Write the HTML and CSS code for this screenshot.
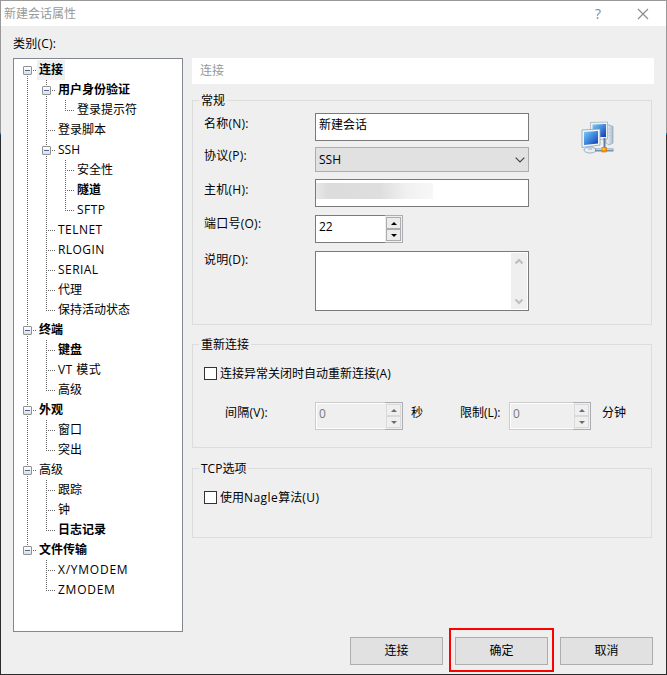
FILE: index.html
```html
<!DOCTYPE html>
<html lang="zh-CN">
<head>
<meta charset="utf-8">
<title>新建会话属性</title>
<link rel="stylesheet" href="styles.css">
</head>
<body>
<div class="window">
  <header class="titlebar">
    <h1>新建会话属性</h1>
    <span class="help">?</span>
    <svg class="close" width="12" height="12" viewBox="0 0 12 12"><path d="M1 1L11 11M11 1L1 11" stroke="#8a8a8a" stroke-width="1.1" fill="none"/></svg>
  </header>
  <div class="category">类别(C):</div>
  <main class="content">
    <nav class="tree">
      <div class="row"><i class="box first"></i><b class="selected">连接</b></div>
      <div class="row"><i class="line"></i><i class="box"></i><b>用户身份验证</b></div>
      <div class="row"><i class="line"></i><i class="line"></i><i class="end"></i><span>登录提示符</span></div>
      <div class="row"><i class="line"></i><i class="tee"></i><span>登录脚本</span></div>
      <div class="row"><i class="line"></i><i class="box"></i><span>SSH</span></div>
      <div class="row"><i class="line"></i><i class="line"></i><i class="tee"></i><span>安全性</span></div>
      <div class="row"><i class="line"></i><i class="line"></i><i class="tee"></i><b>隧道</b></div>
      <div class="row"><i class="line"></i><i class="line"></i><i class="end"></i><span class="latin">SFTP</span></div>
      <div class="row"><i class="line"></i><i class="tee"></i><span class="latin">TELNET</span></div>
      <div class="row"><i class="line"></i><i class="tee"></i><span class="latin">RLOGIN</span></div>
      <div class="row"><i class="line"></i><i class="tee"></i><span class="latin">SERIAL</span></div>
      <div class="row"><i class="line"></i><i class="tee"></i><span>代理</span></div>
      <div class="row"><i class="line"></i><i class="end"></i><span>保持活动状态</span></div>
      <div class="row"><i class="box"></i><b>终端</b></div>
      <div class="row"><i class="line"></i><i class="tee"></i><b>键盘</b></div>
      <div class="row"><i class="line"></i><i class="tee"></i><span class="latin">VT 模式</span></div>
      <div class="row"><i class="line"></i><i class="end"></i><span>高级</span></div>
      <div class="row"><i class="box"></i><b>外观</b></div>
      <div class="row"><i class="line"></i><i class="tee"></i><span>窗口</span></div>
      <div class="row"><i class="line"></i><i class="end"></i><span>突出</span></div>
      <div class="row"><i class="box"></i><span>高级</span></div>
      <div class="row"><i class="line"></i><i class="tee"></i><span>跟踪</span></div>
      <div class="row"><i class="line"></i><i class="tee"></i><span>钟</span></div>
      <div class="row"><i class="line"></i><i class="end"></i><b>日志记录</b></div>
      <div class="row"><i class="box last"></i><b>文件传输</b></div>
      <div class="row"><i></i><i class="tee"></i><span class="latin wide">X/YMODEM</span></div>
      <div class="row"><i></i><i class="end"></i><span class="latin wide">ZMODEM</span></div>
    </nav>
    <div class="panel">
      <h2 class="heading">连接</h2>

      <section class="group general">
        <h3>常规</h3>
        <div class="general-body">
          <div class="form">
            <label class="low">名称(N):</label>
            <div class="input">新建会话</div>
            <label>协议(P):</label>
            <div class="select"><span>SSH</span><svg width="10" height="6" viewBox="0 0 10 6"><path d="M.7 .7L5 5L9.3 .7" fill="none" stroke="#444" stroke-width="1.2"/></svg></div>
            <label class="low">主机(H):</label>
            <div class="input host"><div class="redacted"></div></div>
            <label>端口号(O):</label>
            <div class="spinner">
              <div class="value">22</div>
              <div class="steps"><div class="step"><i class="up"></i></div><div class="step"><i class="down"></i></div></div>
            </div>
            <label>说明(D):</label>
            <div class="textarea">
              <div class="scrollbar">
                <svg width="8" height="7" viewBox="0 0 8 7"><path d="M.5 5.5L4 2L7.5 5.5" fill="none" stroke="#bfbfbf" stroke-width="2.2"/></svg>
                <svg width="8" height="7" viewBox="0 0 8 7"><path d="M.5 1.5L4 5L7.5 1.5" fill="none" stroke="#bfbfbf" stroke-width="2.2"/></svg>
              </div>
            </div>
          </div>
          <svg class="network" width="34" height="34" viewBox="0 0 34 34">
            <defs>
              <linearGradient id="screen" x1="0" y1="0" x2="1" y2="1"><stop offset="0" stop-color="#7ccdf6"/><stop offset=".5" stop-color="#3f86dd"/><stop offset="1" stop-color="#1339b4"/></linearGradient>
              <linearGradient id="tower" x1="0" y1="0" x2="1" y2="0"><stop offset="0" stop-color="#f6f8fa"/><stop offset="1" stop-color="#a9bccb"/></linearGradient>
            </defs>
            <path d="M25 3L32 5.500V22L28 24L25 22Z" fill="url(#tower)" stroke="#8fa5b6" stroke-width=".7"/>
            <path d="M27 8L30 9M27 11L30 12M27 14L30 15" stroke="#bccad5" stroke-width=".8"/>
            <path d="M9.500 1.500L26.500 1V18L20 18.500L9.500 17Z" fill="#eef2f5" stroke="#a3b3c0" stroke-width=".8"/>
            <path d="M11.500 3.500L25 3V16H11.500Z" fill="url(#screen)"/>
            <ellipse cx="9" cy="29" rx="6" ry="3" fill="#e7edf2" stroke="#8ba0b2" stroke-width=".8"/>
            <path d="M6 24H12L11 29H7.500Z" fill="#bccbd6"/>
            <path d="M1 9L19 8V24L1 26.500Z" fill="#f2f5f7" stroke="#8da1b2" stroke-width=".8"/>
            <path d="M3 11L17 10V22.500L3 24Z" fill="url(#screen)"/>
            <path d="M23.500 17V28" stroke="#617f98" stroke-width="2"/>
            <path d="M14 29H32.500" stroke="#7090a8" stroke-width="3"/>
            <path d="M15 28.500H32" stroke="#d3dfe7" stroke-width=".8"/>
            <rect x="21" y="26.500" width="4.500" height="4.500" fill="#f99708" stroke="#dc7100" stroke-width=".6"/>
            <rect x="21.500" y="27" width="2" height="2" fill="#ffd23c"/>
          </svg>
        </div>
      </section>

      <section class="group reconnect">
        <h3>重新连接</h3>
        <label class="check"><span class="tick"></span>连接异常关闭时自动重新连接(A)</label>
        <div class="timing">
          <span class="interval">间隔(V):</span>
          <div class="spinner disabled">
            <div class="value">0</div>
            <div class="steps"><div class="step"><i class="up"></i></div><div class="step"><i class="down"></i></div></div>
          </div>
          <span class="unit">秒</span>
          <span class="limit">限制(L):</span>
          <div class="spinner disabled short">
            <div class="value">0</div>
            <div class="steps"><div class="step"><i class="up"></i></div><div class="step"><i class="down"></i></div></div>
          </div>
          <span class="minutes">分钟</span>
        </div>
      </section>

      <section class="group tcp">
        <h3>TCP选项</h3>
        <label class="check"><span class="tick"></span><span>使用<span class="latin">Nagle</span>算法<span class="latin">(U)</span></span></label>
      </section>
    </div>
  </main>
  <footer class="actions">
    <div class="button">连接</div>
    <div class="button marked">确定</div>
    <div class="button">取消</div>
  </footer>
</div>
</body>
</html>
```
FILE: styles.css
```css
*, *::before, *::after { box-sizing: border-box; }

body {
  margin: 0;
  font: 12px/18px "Open Sans", "Noto Sans CJK SC", sans-serif;
  color: #000;
}

h1, h2, h3 { margin: 0; font-size: 12px; font-weight: 400; }

.window {
  width: 667px;
  height: 675px;
  display: flex;
  flex-direction: column;
  border: 1px solid;
  border-image: linear-gradient(#999 0 133px, #1d6a9c 133px 135px, #2b2b2b 135px) 1;
  background: #efefef;
}

.titlebar {
  height: 25px;
  display: flex;
  align-items: center;
  padding: 0 17px 0 3px;
  background: #fff;
  color: #999;
}
.titlebar h1 { flex: 1; }
.help { font-size: 14px; margin-right: 36px; color: #8a8a8a; }

.category { height: 22px; margin-top: 9px; padding-left: 12px; letter-spacing: .2px; }

.content { display: flex; margin-left: 12px; padding-top: 1px; }

.tree {
  width: 170px;
  height: 574px;
  padding: 1px 0 0 4px;
  border: 1px solid #828790;
  background: #fff;
}

.row { display: flex; height: 20px; line-height: 20px; }
.row b, .row span { padding: 0 2px; }
.row b.selected { background: #efefef; }
.latin { letter-spacing: .45px; }
.latin.wide { letter-spacing: .75px; }

/* Tree connectors: one 19px cell for each indent level */
.row i {
  --dots-v: repeating-linear-gradient(to bottom, #666 0 1px, transparent 1px 2px);
  --dots-h: repeating-linear-gradient(to right, #666 0 1px, transparent 1px 2px);
  flex: none;
  width: 19px;
  height: 20px;
  background-repeat: no-repeat;
}
.row .line { background-image: var(--dots-v); background-size: 1px 20px; background-position: 9px 0; }
.row .tee {
  background-image: var(--dots-v), var(--dots-h);
  background-size: 1px 20px, 9px 1px;
  background-position: 9px 0, 9px 10px;
}
.row .end {
  background-image: var(--dots-v), var(--dots-h);
  background-size: 1px 11px, 9px 1px;
  background-position: 9px 0, 9px 10px;
}
.row .box {
  padding: 6px 0 0 5px;
  background-image: var(--dots-v), var(--dots-v), var(--dots-h);
  background-size: 1px 6px, 1px 4px, 4px 1px;
  background-position: 9px 0, 9px 16px, 15px 10px;
}
.row .box.first { background-size: 0 0, 1px 4px, 4px 1px; }
.row .box.last { background-size: 1px 6px, 0 0, 4px 1px; }
.box::before {
  content: "";
  display: block;
  width: 9px;
  height: 9px;
  border: 1px solid #919191;
  border-radius: 1px;
  background: linear-gradient(#4b63a7, #4b63a7) center / 5px 1px no-repeat, linear-gradient(#fff, #dedede);
}

.panel { width: 462px; margin-left: 9px; }
.heading { height: 26px; line-height: 26px; padding-left: 8px; background: #fff; color: #999; }

.group { width: 460px; border: 1px solid #dcdcdc; }
.group h3 {
  width: max-content;
  height: 18px;
  margin: -9px 0 0 6px;
  padding: 0 2px;
  background: #efefef;
}
.general { height: 225px; margin-top: 16px; }
.reconnect { height: 104px; margin-top: 19px; }
.tcp { height: 70px; margin-top: 20px; }

.general-body { display: flex; align-items: flex-start; padding: 3px 0 0 11px; }
.form {
  display: grid;
  grid-template-columns: 111px 214px;
  grid-template-rows: 34px 32px 36px 36px 60px;
}
.form label { letter-spacing: .25px; }
.form label.low { padding-top: 2px; }
.network { margin: 8px 0 0 52px; }

.input, .textarea { border: 1px solid #7a7a7a; background: #fff; }
.input { height: 28px; line-height: 22px; padding-left: 3px; }
.input.host { padding: 3px 0 0; }
.redacted {
  width: 117px;
  height: 16px;
  background: linear-gradient(90deg, #e8e8e8, #dcdcdc 10%, #dedede 55%, #f1f1f1 78%, #f7f7f7);
}
.select {
  height: 25px;
  display: flex;
  align-items: center;
  justify-content: space-between;
  padding: 0 3px;
  border: 1px solid #adadad;
  background: #e1e1e1;
}
.textarea { height: 60px; padding: 1px; display: flex; justify-content: flex-end; }
.scrollbar {
  width: 16px;
  display: flex;
  flex-direction: column;
  align-items: center;
  justify-content: space-between;
  padding: 5px 0 4px;
  background: #efefef;
}

.spinner { width: 88px; height: 28px; display: flex; }
.spinner.short { width: 82px; }
.value {
  flex: 1;
  padding-left: 3px;
  line-height: 22px;
  border: 1px solid #7a7a7a;
  border-right: 0;
  background: #fff;
}
.steps {
  width: 18px;
  padding: 1px;
  border: 1px solid #abadb3;
  border-left: 0;
}
.step {
  width: 15px;
  height: 12px;
  display: flex;
  align-items: center;
  justify-content: center;
  border: 1px solid #acacac;
  background: #ececec;
}
.step i { border: 3px solid transparent; border-top-width: 0; border-bottom: 3px solid #000; }
.step i.down { border-top: 3px solid #000; border-bottom-width: 0; }
.disabled .value { border-color: #ccc; background: #efefef; color: #787878; box-shadow: inset 1px 1px #fff, inset 0 -1px #fff; }
.disabled .step { border-color: #d9d9d9; background: #efefef; }
.disabled .step i.up { border-bottom-color: #6d6d6d; }
.disabled .step i.down { border-top-color: #6d6d6d; }

.check { display: flex; align-items: flex-start; height: 18px; margin: 11px 0 0 11px; }
.tick { width: 13px; height: 13px; margin: 2px 3px 0 0; border: 1px solid #333; background: #fff; }
.timing { display: flex; margin: 19px 0 0 32px; line-height: 22px; }
.interval { width: 90px; letter-spacing: .25px; }
.unit { width: 57px; padding-left: 8px; }
.limit { width: 49px; }
.minutes { padding-left: 11px; }

.actions { display: flex; gap: 12px; margin: 5px 0 0 349px; }
.button {
  position: relative;
  width: 93px;
  height: 28px;
  line-height: 26px;
  text-align: center;
  border: 1px solid #adadad;
  background: #e1e1e1;
}
.marked::after {
  content: "";
  position: absolute;
  inset: -10px -7px -8px;
  border: 2px solid #f00;
}
```
